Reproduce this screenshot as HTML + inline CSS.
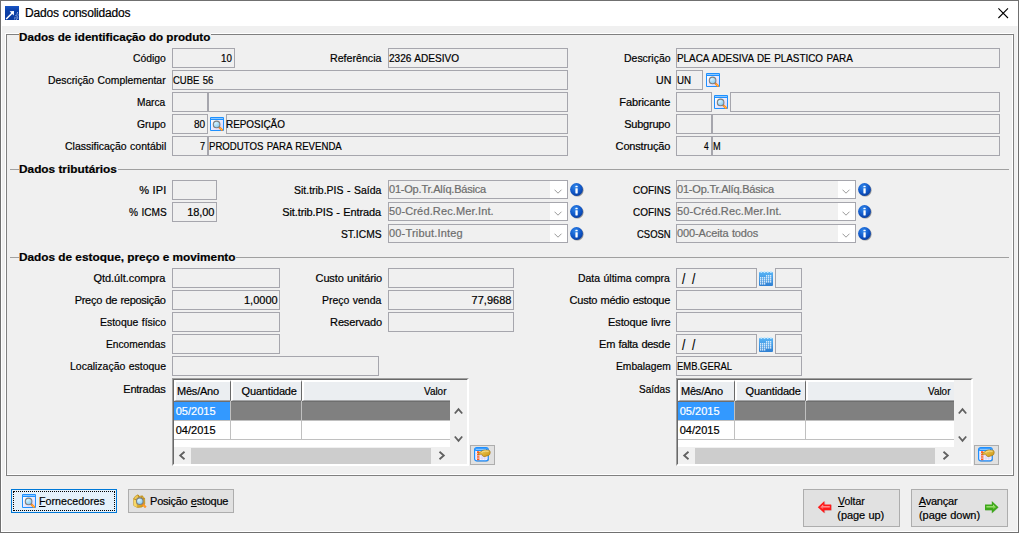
<!DOCTYPE html>
<html lang="pt-BR"><head><meta charset="utf-8"><title>Dados consolidados</title>
<style>
html,body{margin:0;padding:0;background:#fff;}
body{width:1023px;height:535px;position:relative;overflow:hidden;font:11px/13px 'Liberation Sans', sans-serif;color:#000;}
#win{position:absolute;left:0;top:0;width:1017px;height:531px;border:1px solid #707070;background:#fff;}
#client{position:absolute;left:2px;top:26px;width:1015px;height:505px;background:#f0f0f0;border-right:1px solid #f8f8f8;}
.t{position:absolute;white-space:pre;line-height:13px;font-size:11px;transform-origin:0 0;-webkit-text-stroke:0.2px;}
.t u{text-decoration:underline;text-underline-offset:1px;text-decoration-thickness:1px;}
.b{position:absolute;border:1px solid #a6a6ad;background:#f0f0f0;}
.ic{position:absolute;overflow:visible;}
.btn{position:absolute;border:1px solid #adadad;background:#e1e1e1;}
.grid{position:absolute;width:293px;height:84px;border-style:solid;border-width:2px;border-color:#a0a0a0 #fff #fff #a0a0a0;background:#fff;box-shadow:inset 0 0 0 0 #000;}
.grid:before{content:"";position:absolute;left:-1px;top:-1px;width:294px;height:85px;border-left:1px solid #696969;border-top:1px solid #696969;box-sizing:border-box;pointer-events:none;}
.hc{position:absolute;background:#ebeef1;border-style:solid;border-width:2px 1px 1px 2px;border-color:#fff #696969 #a4a5a7 #fff;}
.hl{position:absolute;background:#a0a0a0;height:1px;}
</style></head><body>
<svg width="0" height="0" style="position:absolute">
<defs>
<linearGradient id="gLav" x1="0" y1="0" x2="1" y2="1"><stop offset="0" stop-color="#ffffff"/><stop offset="1" stop-color="#d4d2fb"/></linearGradient>
<radialGradient id="gLens" cx="0.35" cy="0.3" r="0.8"><stop offset="0" stop-color="#d9f3ff"/><stop offset="1" stop-color="#7cc6ee"/></radialGradient>
<radialGradient id="gInfo" cx="0.4" cy="0.3" r="0.8"><stop offset="0" stop-color="#2f86ea"/><stop offset="0.6" stop-color="#0f55c6"/><stop offset="1" stop-color="#07358f"/></radialGradient>
<linearGradient id="gCal" x1="0" y1="0" x2="0" y2="1"><stop offset="0" stop-color="#58b4f6"/><stop offset="1" stop-color="#2f7fd2"/></linearGradient>
<linearGradient id="gTi" x1="0" y1="0" x2="0" y2="1"><stop offset="0" stop-color="#1a56c6"/><stop offset="0.35" stop-color="#0b3fa8"/><stop offset="1" stop-color="#0a3a9e"/></linearGradient>
<linearGradient id="gRedHi" x1="0" y1="0" x2="0" y2="1"><stop offset="0" stop-color="#ffc0c0"/><stop offset="1" stop-color="#ff3a3a"/></linearGradient>
<linearGradient id="gGrnHi" x1="0" y1="0" x2="0" y2="1"><stop offset="0" stop-color="#c4f29a"/><stop offset="1" stop-color="#55b925"/></linearGradient>
<linearGradient id="gGold" x1="0" y1="0" x2="1" y2="1"><stop offset="0" stop-color="#f7d666"/><stop offset="1" stop-color="#c8910f"/></linearGradient>
<symbol id="search" viewBox="0 0 14 14">
 <rect x="0" y="0" width="14" height="14" rx="1" fill="#1e90ff"/>
 <rect x="1" y="1" width="12" height="1" fill="#8cc8ff"/>
 <rect x="1" y="3" width="12" height="10" fill="url(#gLav)"/>
 <line x1="9" y1="10" x2="12.6" y2="13.6" stroke="#ff8a1e" stroke-width="2.2"/>
 <line x1="10.4" y1="11.4" x2="11.8" y2="12.8" stroke="#ffd23c" stroke-width="1"/>
 <circle cx="6.6" cy="7.4" r="3.3" fill="url(#gLens)" stroke="#7f7f7f" stroke-width="1.1"/>
</symbol>
<symbol id="info" viewBox="0 0 14 14">
 <circle cx="7.3" cy="7.3" r="6.3" fill="#333" opacity="0.45"/>
 <circle cx="6.5" cy="6.5" r="6.4" fill="url(#gInfo)"/>
 <rect x="5.4" y="2.7" width="2.3" height="1.6" rx="0.5" fill="#fff"/>
 <rect x="5.4" y="5.2" width="2.3" height="5.2" rx="0.4" fill="#fff"/>
</symbol>
<symbol id="cal" viewBox="0 0 14 15">
 <rect x="0" y="1" width="14" height="14" rx="1" fill="url(#gCal)"/>
 <g fill="#bfe6ff"><rect x="1.5" y="0" width="1.6" height="2"/><rect x="4.7" y="0" width="1.6" height="2"/><rect x="7.9" y="0" width="1.6" height="2"/><rect x="11.1" y="0" width="1.6" height="2"/></g>
 <g fill="#f4fbff">
  <rect x="7" y="4.2" width="1.3" height="1.3"/><rect x="9" y="4.2" width="1.3" height="1.3"/><rect x="11" y="4.2" width="1.3" height="1.3"/>
  <rect x="1" y="6.2" width="1.3" height="1.3"/><rect x="3" y="6.2" width="1.3" height="1.3"/><rect x="5" y="6.2" width="1.3" height="1.3"/><rect x="7" y="6.2" width="1.3" height="1.3"/><rect x="9" y="6.2" width="1.3" height="1.3"/><rect x="11" y="6.2" width="1.3" height="1.3"/>
  <rect x="1" y="8.2" width="1.3" height="1.3"/><rect x="3" y="8.2" width="1.3" height="1.3"/><rect x="5" y="8.2" width="1.3" height="1.3"/><rect x="7" y="8.2" width="1.3" height="1.3"/><rect x="9" y="8.2" width="1.3" height="1.3"/><rect x="11" y="8.2" width="1.3" height="1.3"/>
  <rect x="1" y="10.2" width="1.3" height="1.3"/><rect x="3" y="10.2" width="1.3" height="1.3"/><rect x="5" y="10.2" width="1.3" height="1.3"/><rect x="7" y="10.2" width="1.3" height="1.3"/><rect x="9" y="10.2" width="1.3" height="1.3"/><rect x="11" y="10.2" width="1.3" height="1.3"/>
  <rect x="1" y="12.2" width="1.3" height="1.3"/><rect x="3" y="12.2" width="1.3" height="1.3"/><rect x="5" y="12.2" width="1.3" height="1.3"/>
 </g>
</symbol>
<symbol id="gridic" viewBox="0 0 17 16">
 <rect x="1.4" y="1.4" width="13.6" height="13.2" rx="2" fill="#555" opacity="0.45"/>
 <rect x="0.6" y="0.6" width="13.6" height="13.2" rx="2" fill="#f4f2ff" stroke="#1e90ff" stroke-width="1.2"/>
 <rect x="1.2" y="1.2" width="12.4" height="2.8" fill="#1e90ff"/>
 <rect x="2" y="2" width="10" height="0.8" fill="#9fd2ff"/>
 <rect x="3" y="4.2" width="2.4" height="9" fill="#ff5a1e"/>
 <g stroke="#cfc8f2" stroke-width="0.6"><line x1="1.5" y1="6.5" x2="13.5" y2="6.5"/><line x1="1.5" y1="8.8" x2="13.5" y2="8.8"/><line x1="1.5" y1="11.1" x2="13.5" y2="11.1"/><line x1="8" y1="4" x2="8" y2="13.2"/><line x1="10.8" y1="4" x2="10.8" y2="13.2"/></g>
 <g stroke="#ffd0b8" stroke-width="0.6"><line x1="3" y1="6.5" x2="5.4" y2="6.5"/><line x1="3" y1="8.8" x2="5.4" y2="8.8"/><line x1="3" y1="11.1" x2="5.4" y2="11.1"/></g>
 <path d="M4.2 6.6 L6.8 4.6 Q8.6 3 11 3 L15 3.2 Q16.4 3.6 16.2 5.8 Q16 7.8 14.6 8.4 L11 9.6 Q9.4 9.8 8.6 8.8 L7.6 7.2 L4.6 7.4 Z" fill="url(#gGold)" stroke="#a06e06" stroke-width="0.6"/>
 <path d="M7.6 5.4 Q9.2 4 11.4 4 L14.6 4.2" fill="none" stroke="#fbe7a0" stroke-width="0.9"/>
</symbol>
<symbol id="posic" viewBox="0 0 14 14">
 <path d="M0.6 4.6 L2.4 2.2 L5 0.8 L6.4 2.4 L9.2 1.8 L11.6 4.2 L11.8 10 L9 13 L4.4 13.6 L0.8 11.6 Z" fill="url(#gGold)" stroke="#b8860b" stroke-width="0.6"/>
 <path d="M0.8 5 L3.6 6.4 L3.8 13.2 L0.9 11.5 Z" fill="#f6d868"/>
 <path d="M0.8 4.8 L3.8 6.2 L6.6 2.6 M3.8 6.2 L11.4 4.6 M5 0.9 L6 3.2 M9.2 1.9 L8.2 4.9" fill="none" stroke="#a57406" stroke-width="0.7"/>
 <line x1="9.6" y1="10.2" x2="12.8" y2="13.4" stroke="#ff8a1e" stroke-width="2.2"/>
 <line x1="10.8" y1="11.4" x2="12" y2="12.6" stroke="#ffd23c" stroke-width="1"/>
 <circle cx="6.8" cy="7.2" r="3.3" fill="url(#gLens)" stroke="#7f7f7f" stroke-width="1.1"/>
</symbol>
</defs></svg>
<div id="win"></div>
<div id="client"></div>
<!-- title bar -->
<svg class="ic" style="left:5px;top:6px" width="14" height="14" viewBox="0 0 14 14">
 <rect width="14" height="14" fill="url(#gTi)"/>
 <path d="M1.2 13 L7.2 7" stroke="#fff" stroke-width="1.5" fill="none"/>
 <path d="M4.6 5.2 L9 5 L8.8 9.4 Z" fill="#fff"/>
 <g fill="#8fa9e0"><rect x="12" y="6" width="1" height="1.5"/><rect x="11.3" y="7.6" width="1" height="1"/><rect x="12.6" y="8.4" width="1" height="1"/><rect x="10.4" y="9" width="1.2" height="1"/><rect x="11.6" y="9.8" width="1" height="1.2"/><rect x="9.4" y="10.8" width="1" height="1"/><rect x="10.6" y="11.4" width="1.2" height="1"/><rect x="12.2" y="11.2" width="1" height="1.6"/><rect x="9" y="12.4" width="1.2" height="1"/><rect x="11" y="12.8" width="1" height="1"/></g>
</svg>
<svg class="ic" style="left:998px;top:8px" width="11" height="11" viewBox="0 0 11 11"><path d="M0.4 0.4 L10 10 M10 0.4 L0.4 10" stroke="#000" stroke-width="1.1" fill="none"/></svg>
<!-- group box -->
<div style="position:absolute;left:5px;top:33px;width:1006px;height:440px;border:1px solid #fff"></div>
<div style="position:absolute;left:6px;top:34px;width:1006px;height:440px;border:1px solid #808080"></div>
<div style="position:absolute;left:19px;top:32px;width:192px;height:5px;background:#f0f0f0"></div>
<!-- section lines -->
<div class="hl" style="left:10px;top:169px;width:999px"></div>
<div style="position:absolute;left:19px;top:167px;width:99px;height:5px;background:#f0f0f0"></div>
<div class="hl" style="left:10px;top:257px;width:999px"></div>
<div style="position:absolute;left:19px;top:255px;width:217px;height:5px;background:#f0f0f0"></div>
<div class="b" style="left:172px;top:48px;width:61px;height:18px;"></div>
<div class="b" style="left:388px;top:48px;width:178px;height:18px;"></div>
<div class="b" style="left:676px;top:48px;width:322px;height:18px;"></div>
<div class="b" style="left:172px;top:70px;width:394px;height:18px;"></div>
<div class="b" style="left:676px;top:70px;width:25px;height:18px;"></div>
<div class="b" style="left:172px;top:92px;width:34px;height:18px;"></div>
<div class="b" style="left:208px;top:92px;width:358px;height:18px;"></div>
<div class="b" style="left:676px;top:92px;width:34px;height:18px;"></div>
<div class="b" style="left:730px;top:92px;width:268px;height:18px;"></div>
<div class="b" style="left:172px;top:114px;width:34px;height:18px;"></div>
<div class="b" style="left:226px;top:114px;width:340px;height:18px;"></div>
<div class="b" style="left:676px;top:114px;width:34px;height:18px;"></div>
<div class="b" style="left:712px;top:114px;width:286px;height:18px;"></div>
<div class="b" style="left:172px;top:136px;width:34px;height:18px;"></div>
<div class="b" style="left:208px;top:136px;width:358px;height:18px;"></div>
<div class="b" style="left:676px;top:136px;width:34px;height:18px;"></div>
<div class="b" style="left:712px;top:136px;width:286px;height:18px;"></div>
<div class="b" style="left:172px;top:180px;width:43px;height:18px;"></div>
<div class="b" style="left:172px;top:202px;width:43px;height:18px;"></div>
<div class="b" style="left:172px;top:268px;width:106px;height:18px;"></div>
<div class="b" style="left:172px;top:290px;width:106px;height:18px;"></div>
<div class="b" style="left:172px;top:312px;width:106px;height:18px;"></div>
<div class="b" style="left:172px;top:334px;width:106px;height:18px;"></div>
<div class="b" style="left:172px;top:356px;width:205px;height:18px;"></div>
<div class="b" style="left:388px;top:268px;width:124px;height:18px;"></div>
<div class="b" style="left:388px;top:290px;width:124px;height:18px;"></div>
<div class="b" style="left:388px;top:312px;width:124px;height:18px;"></div>
<div class="b" style="left:676px;top:268px;width:79px;height:18px;"></div>
<div class="b" style="left:775px;top:268px;width:25px;height:18px;"></div>
<div class="b" style="left:676px;top:290px;width:124px;height:18px;"></div>
<div class="b" style="left:676px;top:312px;width:124px;height:18px;"></div>
<div class="b" style="left:676px;top:334px;width:79px;height:18px;"></div>
<div class="b" style="left:775px;top:334px;width:25px;height:18px;"></div>
<div class="b" style="left:676px;top:356px;width:124px;height:18px;"></div>
<div class="b" style="left:388px;top:180px;width:178px;height:17px"><div style="position:absolute;right:0;top:0;width:17px;height:17px;background:#fff"></div><svg style="position:absolute;left:165px;top:8px" width="10" height="6" viewBox="0 0 10 6"><path d="M0.5 0.7 L4 4.2 L7.5 0.7" fill="none" stroke="#9a9a9a" stroke-width="1"/></svg></div>
<div class="b" style="left:676px;top:180px;width:178px;height:17px"><div style="position:absolute;right:0;top:0;width:17px;height:17px;background:#fff"></div><svg style="position:absolute;left:165px;top:8px" width="10" height="6" viewBox="0 0 10 6"><path d="M0.5 0.7 L4 4.2 L7.5 0.7" fill="none" stroke="#9a9a9a" stroke-width="1"/></svg></div>
<div class="b" style="left:388px;top:202px;width:178px;height:17px"><div style="position:absolute;right:0;top:0;width:17px;height:17px;background:#fff"></div><svg style="position:absolute;left:165px;top:8px" width="10" height="6" viewBox="0 0 10 6"><path d="M0.5 0.7 L4 4.2 L7.5 0.7" fill="none" stroke="#9a9a9a" stroke-width="1"/></svg></div>
<div class="b" style="left:676px;top:202px;width:178px;height:17px"><div style="position:absolute;right:0;top:0;width:17px;height:17px;background:#fff"></div><svg style="position:absolute;left:165px;top:8px" width="10" height="6" viewBox="0 0 10 6"><path d="M0.5 0.7 L4 4.2 L7.5 0.7" fill="none" stroke="#9a9a9a" stroke-width="1"/></svg></div>
<div class="b" style="left:388px;top:224px;width:178px;height:17px"><div style="position:absolute;right:0;top:0;width:17px;height:17px;background:#fff"></div><svg style="position:absolute;left:165px;top:8px" width="10" height="6" viewBox="0 0 10 6"><path d="M0.5 0.7 L4 4.2 L7.5 0.7" fill="none" stroke="#9a9a9a" stroke-width="1"/></svg></div>
<div class="b" style="left:676px;top:224px;width:178px;height:17px"><div style="position:absolute;right:0;top:0;width:17px;height:17px;background:#fff"></div><svg style="position:absolute;left:165px;top:8px" width="10" height="6" viewBox="0 0 10 6"><path d="M0.5 0.7 L4 4.2 L7.5 0.7" fill="none" stroke="#9a9a9a" stroke-width="1"/></svg></div>
<div class="grid" style="left:172px;top:378px">
<div class="hc" style="left:0px;top:0;width:54px;height:18px"></div>
<div class="hc" style="left:57px;top:0;width:68px;height:18px"></div>
<div class="hc" style="left:128px;top:0;width:146px;height:18px;border-right-width:0"></div>
<div style="position:absolute;left:276px;top:0;width:17px;height:84px;background:#f0f0f0"></div>
<div style="position:absolute;left:0;top:21px;width:56px;height:19px;background:#3399ff"></div>
<div style="position:absolute;left:57px;top:21px;width:70px;height:19px;background:#808080"></div>
<div style="position:absolute;left:128px;top:21px;width:148px;height:19px;background:#808080"></div>
<div style="position:absolute;left:0;top:21px;width:276px;height:1px;background:#6e6e6e"></div>
<div style="position:absolute;left:56px;top:21px;width:1px;height:39px;background:#c0c0c0"></div>
<div style="position:absolute;left:127px;top:21px;width:1px;height:39px;background:#c0c0c0"></div>
<div style="position:absolute;left:0;top:40px;width:276px;height:1px;background:#c0c0c0"></div>
<div style="position:absolute;left:0;top:59px;width:276px;height:1px;background:#c0c0c0"></div>
<div style="position:absolute;left:0;top:67px;width:276px;height:17px;background:#f0f0f0"></div>
<div style="position:absolute;left:17px;top:68px;width:240px;height:16px;background:#cdcdcd"></div>
<svg style="position:absolute;left:4px;top:71px" width="8" height="9" viewBox="0 0 8 9"><path d="M6.5 0.8 L2.2 4.5 L6.5 8.2" fill="none" stroke="#606060" stroke-width="1.8"/></svg>
<svg style="position:absolute;left:264px;top:71px" width="8" height="9" viewBox="0 0 8 9"><path d="M1.5 0.8 L5.8 4.5 L1.5 8.2" fill="none" stroke="#606060" stroke-width="1.8"/></svg>
<svg style="position:absolute;left:280px;top:27px" width="9" height="8" viewBox="0 0 9 8"><path d="M0.8 6.5 L4.5 2.2 L8.2 6.5" fill="none" stroke="#606060" stroke-width="1.8"/></svg>
<svg style="position:absolute;left:280px;top:55px" width="9" height="8" viewBox="0 0 9 8"><path d="M0.8 1.5 L4.5 5.8 L8.2 1.5" fill="none" stroke="#606060" stroke-width="1.8"/></svg>
</div>
<div class="btn" style="left:470px;top:445px;width:23px;height:18px"></div>
<svg class="ic" style="left:474px;top:447px" width="17" height="16"><use href="#gridic"/></svg>
<div class="grid" style="left:676px;top:378px">
<div class="hc" style="left:0px;top:0;width:54px;height:18px"></div>
<div class="hc" style="left:57px;top:0;width:68px;height:18px"></div>
<div class="hc" style="left:128px;top:0;width:146px;height:18px;border-right-width:0"></div>
<div style="position:absolute;left:276px;top:0;width:17px;height:84px;background:#f0f0f0"></div>
<div style="position:absolute;left:0;top:21px;width:56px;height:19px;background:#3399ff"></div>
<div style="position:absolute;left:57px;top:21px;width:70px;height:19px;background:#808080"></div>
<div style="position:absolute;left:128px;top:21px;width:148px;height:19px;background:#808080"></div>
<div style="position:absolute;left:0;top:21px;width:276px;height:1px;background:#6e6e6e"></div>
<div style="position:absolute;left:56px;top:21px;width:1px;height:39px;background:#c0c0c0"></div>
<div style="position:absolute;left:127px;top:21px;width:1px;height:39px;background:#c0c0c0"></div>
<div style="position:absolute;left:0;top:40px;width:276px;height:1px;background:#c0c0c0"></div>
<div style="position:absolute;left:0;top:59px;width:276px;height:1px;background:#c0c0c0"></div>
<div style="position:absolute;left:0;top:67px;width:276px;height:17px;background:#f0f0f0"></div>
<div style="position:absolute;left:17px;top:68px;width:240px;height:16px;background:#cdcdcd"></div>
<svg style="position:absolute;left:4px;top:71px" width="8" height="9" viewBox="0 0 8 9"><path d="M6.5 0.8 L2.2 4.5 L6.5 8.2" fill="none" stroke="#606060" stroke-width="1.8"/></svg>
<svg style="position:absolute;left:264px;top:71px" width="8" height="9" viewBox="0 0 8 9"><path d="M1.5 0.8 L5.8 4.5 L1.5 8.2" fill="none" stroke="#606060" stroke-width="1.8"/></svg>
<svg style="position:absolute;left:280px;top:27px" width="9" height="8" viewBox="0 0 9 8"><path d="M0.8 6.5 L4.5 2.2 L8.2 6.5" fill="none" stroke="#606060" stroke-width="1.8"/></svg>
<svg style="position:absolute;left:280px;top:55px" width="9" height="8" viewBox="0 0 9 8"><path d="M0.8 1.5 L4.5 5.8 L8.2 1.5" fill="none" stroke="#606060" stroke-width="1.8"/></svg>
</div>
<div class="btn" style="left:974px;top:445px;width:23px;height:18px"></div>
<svg class="ic" style="left:978px;top:447px" width="17" height="16"><use href="#gridic"/></svg>
<!-- buttons -->
<div class="btn" style="left:11px;top:489px;width:104px;height:22px;border-color:#0078d7;background:#e5f1fb"></div>
<div style="position:absolute;left:13px;top:491px;width:100px;height:18px;border:1px dotted #000"></div>
<div class="btn" style="left:128px;top:489px;width:104px;height:22px"></div>
<div class="btn" style="left:803px;top:489px;width:95px;height:36px"></div>
<div class="btn" style="left:911px;top:489px;width:95px;height:36px"></div>
<svg class="ic" style="left:817px;top:500px" width="16" height="14" viewBox="0 0 16 14">
 <path d="M1.6 7.6 L8.2 1.8 L8.2 5 L14.8 5 L14.8 10.4 L8.2 10.4 L8.2 13.4 Z" fill="#8a6a6a" opacity="0.35"/>
 <path d="M0.8 7.2 L7.4 1.1 L7.4 4.4 L14.2 4.4 L14.2 10.2 L7.4 10.2 L7.4 13.3 Z" fill="#ff1a1a"/>
 <path d="M3.2 7.2 L6.2 4.5 L6.2 6 L12.8 6 L12.8 7.8 L6.2 7.8 L6.2 9.4 Z" fill="url(#gRedHi)"/>
</svg>
<svg class="ic" style="left:984px;top:500px" width="16" height="14" viewBox="0 0 16 14">
 <path d="M14.8 7.6 L8.2 1.8 L8.2 5 L1.6 5 L1.6 10.4 L8.2 10.4 L8.2 13.4 Z" fill="#6a8a6a" opacity="0.35"/>
 <path d="M14.4 7.2 L7.8 1.1 L7.8 4.4 L1 4.4 L1 10.2 L7.8 10.2 L7.8 13.3 Z" fill="#3da81a"/>
 <path d="M12 7.2 L9 4.5 L9 6 L2.4 6 L2.4 7.8 L9 7.8 L9 9.4 Z" fill="url(#gGrnHi)"/>
</svg>
<svg class="ic" style="left:210px;top:117px" width="14" height="14"><use href="#search"/></svg>
<svg class="ic" style="left:705.5px;top:73px" width="14" height="14"><use href="#search"/></svg>
<svg class="ic" style="left:714px;top:95px" width="14" height="14"><use href="#search"/></svg>
<svg class="ic" style="left:22px;top:494px" width="14" height="14"><use href="#search"/></svg>
<svg class="ic" style="left:570px;top:183px" width="14" height="14"><use href="#info"/></svg>
<svg class="ic" style="left:858px;top:183px" width="14" height="14"><use href="#info"/></svg>
<svg class="ic" style="left:570px;top:205px" width="14" height="14"><use href="#info"/></svg>
<svg class="ic" style="left:858px;top:205px" width="14" height="14"><use href="#info"/></svg>
<svg class="ic" style="left:570px;top:227px" width="14" height="14"><use href="#info"/></svg>
<svg class="ic" style="left:858px;top:227px" width="14" height="14"><use href="#info"/></svg>
<svg class="ic" style="left:759px;top:271px" width="14" height="15"><use href="#cal"/></svg>
<svg class="ic" style="left:759px;top:337px" width="14" height="15"><use href="#cal"/></svg>
<svg class="ic" style="left:133px;top:494px" width="14" height="14"><use href="#posic"/></svg>
<span class="t" style="left:25.10px;top:6px;letter-spacing:-0.193px;word-spacing:0.63px;font-size:12px;line-height:15px;">Dados consolidados</span>
<span class="t" style="left:18.70px;top:31px;transform:scaleX(1.0579);word-spacing:-0.03px;font-weight:bold;">Dados de identificação do produto</span>
<span class="t" style="left:19.20px;top:163px;transform:scaleX(1.0764);word-spacing:-0.09px;font-weight:bold;">Dados tributários</span>
<span class="t" style="left:19.00px;top:251px;transform:scaleX(1.0756);word-spacing:-0.08px;font-weight:bold;">Dados de estoque, preço e movimento</span>
<span class="t" style="left:133.12px;top:52px;transform:scaleX(0.9424);">Código</span>
<span class="t" style="left:48.30px;top:74px;transform:scaleX(0.9430);word-spacing:0.59px;">Descrição Complementar</span>
<span class="t" style="left:137.20px;top:96px;transform:scaleX(0.9223);">Marca</span>
<span class="t" style="left:137.12px;top:118px;transform:scaleX(0.9436);">Grupo</span>
<span class="t" style="left:65.40px;top:140px;transform:scaleX(0.9520);word-spacing:0.55px;">Classificação contábil</span>
<span class="t" style="left:139.20px;top:184px;letter-spacing:0.130px;word-spacing:0.25px;">% IPI</span>
<span class="t" style="left:128.80px;top:206px;transform:scaleX(0.9193);word-spacing:0.68px;">% ICMS</span>
<span class="t" style="left:93.40px;top:272px;letter-spacing:-0.017px;">Qtd.últ.compra</span>
<span class="t" style="left:74.68px;top:294px;letter-spacing:-0.290px;word-spacing:0.66px;">Preço de reposição</span>
<span class="t" style="left:100.20px;top:316px;transform:scaleX(0.9491);word-spacing:0.56px;">Estoque físico</span>
<span class="t" style="left:106.20px;top:338px;transform:scaleX(0.9273);">Encomendas</span>
<span class="t" style="left:69.82px;top:360px;transform:scaleX(0.9520);word-spacing:0.55px;">Localização estoque</span>
<span class="t" style="left:123.30px;top:383px;letter-spacing:-0.232px;">Entradas</span>
<span class="t" style="left:330.30px;top:52px;transform:scaleX(0.9667);">Referência</span>
<span class="t" style="left:293.74px;top:184px;transform:scaleX(0.9527);word-spacing:0.57px;">Sit.trib.PIS - Saída</span>
<span class="t" style="left:282.30px;top:206px;letter-spacing:-0.116px;word-spacing:0.50px;">Sit.trib.PIS - Entrada</span>
<span class="t" style="left:341.18px;top:228px;transform:scaleX(0.9344);">ST.ICMS</span>
<span class="t" style="left:315.60px;top:272px;letter-spacing:-0.144px;word-spacing:0.52px;">Custo unitário</span>
<span class="t" style="left:321.90px;top:294px;transform:scaleX(0.9509);word-spacing:0.56px;">Preço venda</span>
<span class="t" style="left:330.10px;top:316px;letter-spacing:-0.147px;">Reservado</span>
<span class="t" style="left:624.36px;top:52px;transform:scaleX(0.9515);">Descrição</span>
<span class="t" style="left:656.16px;top:74px;transform:scaleX(0.9627);">UN</span>
<span class="t" style="left:619.30px;top:96px;letter-spacing:-0.106px;">Fabricante</span>
<span class="t" style="left:624.20px;top:118px;letter-spacing:-0.227px;">Subgrupo</span>
<span class="t" style="left:615.62px;top:140px;letter-spacing:-0.166px;">Construção</span>
<span class="t" style="left:632.80px;top:184px;transform:scaleX(0.9073);">COFINS</span>
<span class="t" style="left:632.80px;top:206px;transform:scaleX(0.9073);">COFINS</span>
<span class="t" style="left:637.08px;top:228px;transform:scaleX(0.8618);">CSOSN</span>
<span class="t" style="left:577.90px;top:272px;transform:scaleX(0.9505);word-spacing:0.59px;">Data última compra</span>
<span class="t" style="left:569.60px;top:294px;letter-spacing:-0.250px;word-spacing:0.63px;">Custo médio estoque</span>
<span class="t" style="left:608.08px;top:316px;letter-spacing:-0.140px;word-spacing:0.57px;">Estoque livre</span>
<span class="t" style="left:599.10px;top:338px;letter-spacing:-0.265px;word-spacing:0.65px;">Em falta desde</span>
<span class="t" style="left:616.22px;top:360px;transform:scaleX(0.9326);">Embalagem</span>
<span class="t" style="left:639.32px;top:383px;transform:scaleX(0.9106);">Saídas</span>
<span class="t" style="left:220.94px;top:52px;transform:scaleX(0.8859);">10</span>
<span class="t" style="left:389.40px;top:52px;transform:scaleX(0.9163);word-spacing:0.75px;">2326 ADESIVO</span>
<span class="t" style="left:173.30px;top:74px;transform:scaleX(0.8637);word-spacing:0.92px;">CUBE 56</span>
<span class="t" style="left:193.72px;top:118px;transform:scaleX(0.9154);">80</span>
<span class="t" style="left:226.48px;top:118px;transform:scaleX(0.9002);">REPOSIÇÃO</span>
<span class="t" style="left:200.00px;top:140px;transform:scaleX(0.8333);">7</span>
<span class="t" style="left:209.00px;top:140px;transform:scaleX(0.8747);word-spacing:0.90px;">PRODUTOS PARA REVENDA</span>
<span class="t" style="left:676.60px;top:52px;transform:scaleX(0.8994);word-spacing:0.81px;">PLACA ADESIVA DE PLASTICO PARA</span>
<span class="t" style="left:677.16px;top:74px;transform:scaleX(0.8852);">UN</span>
<span class="t" style="left:703.80px;top:140px;transform:scaleX(0.7598);">4</span>
<span class="t" style="left:713.30px;top:140px;transform:scaleX(0.8333);">M</span>
<span class="t" style="left:187.20px;top:206px;letter-spacing:-0.082px;">18,00</span>
<span class="t" style="left:389.00px;top:183px;letter-spacing:-0.208px;color:#6d6d6d;">01-Op.Tr.Alíq.Básica</span>
<span class="t" style="left:388.92px;top:205px;letter-spacing:0.141px;color:#6d6d6d;">50-Créd.Rec.Mer.Int.</span>
<span class="t" style="left:389.00px;top:227px;letter-spacing:0.178px;color:#6d6d6d;">00-Tribut.Integ</span>
<span class="t" style="left:677.00px;top:183px;letter-spacing:-0.203px;color:#6d6d6d;">01-Op.Tr.Alíq.Básica</span>
<span class="t" style="left:676.92px;top:205px;letter-spacing:0.141px;color:#6d6d6d;">50-Créd.Rec.Mer.Int.</span>
<span class="t" style="left:677.08px;top:227px;letter-spacing:-0.122px;word-spacing:0.54px;color:#6d6d6d;">000-Aceita todos</span>
<span class="t" style="left:243.90px;top:294px;letter-spacing:0.035px;">1,0000</span>
<span class="t" style="left:471.60px;top:294px;letter-spacing:0.009px;">77,9688</span>
<span class="t" style="left:677.00px;top:360px;transform:scaleX(0.8569);">EMB.GERAL</span>
<span class="t" style="left:177.00px;top:385px;letter-spacing:-0.215px;">Mês/Ano</span>
<span class="t" style="left:241.60px;top:385px;letter-spacing:-0.174px;">Quantidade</span>
<span class="t" style="left:423.62px;top:385px;transform:scaleX(0.9024);">Valor</span>
<span class="t" style="left:175.70px;top:405px;letter-spacing:0.009px;color:#fff;">05/2015</span>
<span class="t" style="left:175.70px;top:424px;letter-spacing:0.009px;">04/2015</span>
<span class="t" style="left:681.00px;top:385px;letter-spacing:-0.215px;">Mês/Ano</span>
<span class="t" style="left:745.60px;top:385px;letter-spacing:-0.174px;">Quantidade</span>
<span class="t" style="left:927.62px;top:385px;transform:scaleX(0.9024);">Valor</span>
<span class="t" style="left:679.70px;top:405px;letter-spacing:0.009px;color:#fff;">05/2015</span>
<span class="t" style="left:679.70px;top:424px;letter-spacing:0.009px;">04/2015</span>
<span class="t" style="left:39.22px;top:495px;transform:scaleX(0.9704);"><u>F</u>ornecedores</span>
<span class="t" style="left:150.10px;top:495px;letter-spacing:-0.261px;word-spacing:0.64px;">Posição <u>e</u>stoque</span>
<span class="t" style="left:837.80px;top:495px;transform:scaleX(0.9485);"><u>V</u>oltar</span>
<span class="t" style="left:837.36px;top:509px;letter-spacing:-0.081px;word-spacing:0.45px;">(page up)</span>
<span class="t" style="left:918.80px;top:495px;letter-spacing:-0.232px;"><u>A</u>vançar</span>
<span class="t" style="left:919.00px;top:509px;letter-spacing:-0.052px;word-spacing:0.43px;">(page down)</span>
<span class="t" style="left:682.3px;top:271px;font-size:15px;line-height:15px;transform:scaleX(0.8)">/</span>
<span class="t" style="left:692.3px;top:271px;font-size:15px;line-height:15px;transform:scaleX(0.8)">/</span>
<span class="t" style="left:682.3px;top:337px;font-size:15px;line-height:15px;transform:scaleX(0.8)">/</span>
<span class="t" style="left:692.3px;top:337px;font-size:15px;line-height:15px;transform:scaleX(0.8)">/</span>
</body></html>
